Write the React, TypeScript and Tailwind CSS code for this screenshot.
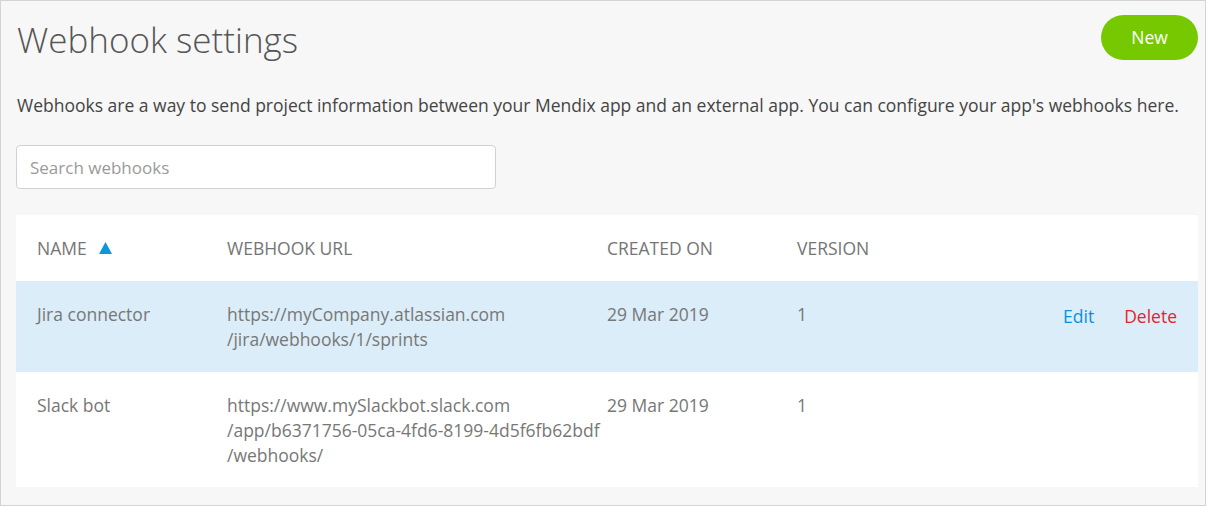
import React from 'react';

type Hook = {
  name: string;
  url: string[];
  created: string;
  version: string;
  selected?: boolean;
};

const hooks: Hook[] = [
  {
    name: 'Jira connector',
    url: ['https://myCompany.atlassian.com', '/jira/webhooks/1/sprints'],
    created: '29 Mar 2019',
    version: '1',
    selected: true,
  },
  {
    name: 'Slack bot',
    url: [
      'https://www.mySlackbot.slack.com',
      '/app/b6371756-05ca-4fd6-8199-4d5f6fb62bdf',
      '/webhooks/',
    ],
    created: '29 Mar 2019',
    version: '1',
  },
];

export default function App() {
  return (
    <div
      className="w-[1206px] h-[506px] border border-[#d4d4d4] bg-[#f7f7f7] px-[15px] pt-[14px] text-[#777]"
      style={{ fontFamily: '"Open Sans", "Liberation Sans", sans-serif' }}
    >
      {/* header */}
      <div className="flex items-start justify-between">
        <h1 className="text-[35px] font-light leading-[48px] text-[#555] pl-[1px] mt-[1px]">Webhook settings</h1>
        <button className="w-[97px] h-[45px] rounded-full bg-[#76c900] text-white text-[17.5px] mr-[-8px]">
          New
        </button>
      </div>

      <p className="mt-[30px] text-[17.5px] leading-[22px] text-[#444] pl-[1px] whitespace-nowrap">
        Webhooks are a way to send project information between your Mendix app and an external app. You can
        configure your app's webhooks here.
      </p>

      <input
        type="text"
        placeholder="Search webhooks"
        className="mt-[29px] block w-[480px] h-[44px] rounded border border-[#d2d2d2] bg-white px-[13px] text-[17px] placeholder:text-[#9a9a9a] outline-none"
      />

      {/* table */}
      <div className="mt-[26px] w-[1182px] bg-white text-[17.5px] leading-[25px]">
        <div className="grid grid-cols-[190px_380px_190px_1fr] h-[66px] items-center uppercase text-[#757575]">
          <div className="pl-[21px] flex items-center gap-[12px]">
            NAME
            <svg width="13" height="12" viewBox="0 0 13 12">
              <polygon points="6.5,0 13,12 0,12" fill="#0b97dc" />
            </svg>
          </div>
          <div className="pl-[21px]">WEBHOOK URL</div>
          <div className="pl-[21px]">CREATED ON</div>
          <div className="pl-[21px]">VERSION</div>
        </div>
        {hooks.map((h) => (
          <div
            key={h.name}
            className={`grid grid-cols-[190px_380px_190px_190px_1fr] pt-[21px] ${h.selected ? 'bg-[#dbedf8] pb-[20px]' : 'pb-[19px]'}`}
          >
            <div className="pl-[21px]">{h.name}</div>
            <div className="pl-[21px] whitespace-nowrap">
              {h.url.map((u) => (
                <div key={u}>{u}</div>
              ))}
            </div>
            <div className="pl-[21px]">{h.created}</div>
            <div className="pl-[21px]">{h.version}</div>
            <div className="flex justify-end gap-[30px] pr-[21px] pt-[2px]">
              {h.selected && (
                <>
                  <span className="text-[#0d8fe0]">Edit</span>
                  <span className="text-[#e4222e]">Delete</span>
                </>
              )}
            </div>
          </div>
        ))}
      </div>
    </div>
  );
}
